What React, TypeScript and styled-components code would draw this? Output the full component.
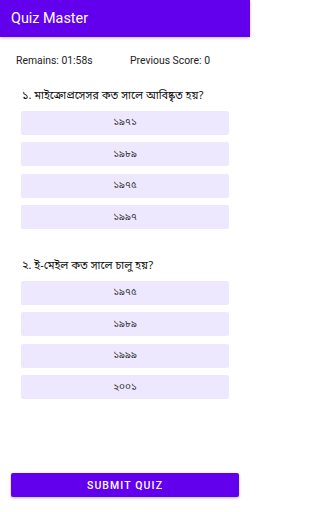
import styled, { createGlobalStyle } from 'styled-components';

const GlobalStyle = createGlobalStyle`
  html, body {
    margin: 0;
    padding: 0;
    background: #ffffff;
  }
  body {
    font-family: Roboto, 'Noto Sans', 'Liberation Sans', sans-serif;
  }
`;

const bengali = `'Noto Sans Bengali', 'Noto Serif Bengali', 'Lohit Bengali', 'Mukti Narrow', 'FreeSans', Roboto, sans-serif`;

const questions = [
  {
    id: 1,
    title: '১. মাইক্রোপ্রসেসর কত সালে আবিষ্কৃত হয়?',
    options: ['১৯৭১', '১৯৮৯', '১৯৭৫', '১৯৯৭'],
  },
  {
    id: 2,
    title: '২. ই-মেইল কত সালে চালু হয়?',
    options: ['১৯৭৫', '১৯৮৯', '১৯৯৯', '২০০১'],
  },
];

const Screen = styled.div`
  display: flex;
  flex-direction: column;
  width: 250px;
  min-height: 512px;
  box-sizing: border-box;
`;

const AppBar = styled.div`
  height: 37px;
  display: flex;
  align-items: center;
  padding-left: 11px;
  background-color: #6200ee;
  box-shadow: 0 1px 3px rgba(0, 0, 0, 0.25);
`;

const AppTitle = styled.h1`
  margin: 0;
  font-size: 14.4px;
  font-weight: 400;
  color: #ffffff;
`;

const StatsRow = styled.div`
  display: grid;
  grid-template-columns: 114px auto;
  padding: 17px 16px 0;
  font-size: 10.4px;
  color: #222222;
  line-height: 14px;
`;

const QuestionBlock = styled.div<{ first?: boolean }>`
  display: flex;
  flex-direction: column;
  gap: 7.5px;
  padding: 0 21px;
  margin-top: ${props => (props.first ? '20px' : '29px')};
`;

const QuestionTitle = styled.div`
  font-family: ${bengali};
  font-size: 11px;
  line-height: 16px;
  color: #111111;
  padding-left: 1px;
  margin-bottom: -1px;
`;

const Option = styled.div`
  height: 24px;
  display: flex;
  align-items: center;
  justify-content: center;
  background-color: #ede8fe;
  border-radius: 2px;
  font-family: ${bengali};
  font-size: 10px;
  color: #333333;
`;

const Footer = styled.div`
  margin-top: auto;
  padding: 0 11px 15px;
`;

const SubmitButton = styled.button`
  width: 100%;
  height: 24px;
  border: none;
  border-radius: 2px;
  background-color: #6200ee;
  color: #ffffff;
  font-family: Roboto, 'Liberation Sans', sans-serif;
  font-size: 10.5px;
  font-weight: 500;
  letter-spacing: 1.1px;
  box-shadow: 0 1px 3px rgba(0, 0, 0, 0.3);
  cursor: pointer;
`;

function App() {
  return (
    <Screen>
      <GlobalStyle />
      <AppBar>
        <AppTitle>Quiz Master</AppTitle>
      </AppBar>
      <StatsRow>
        <span>Remains: 01:58s</span>
        <span>Previous Score: 0</span>
      </StatsRow>
      {questions.map((q, i) => (
        <QuestionBlock key={q.id} first={i === 0}>
          <QuestionTitle>{q.title}</QuestionTitle>
          {q.options.map(opt => (
            <Option key={opt}>{opt}</Option>
          ))}
        </QuestionBlock>
      ))}
      <Footer>
        <SubmitButton>SUBMIT QUIZ</SubmitButton>
      </Footer>
    </Screen>
  );
}

export default App;
